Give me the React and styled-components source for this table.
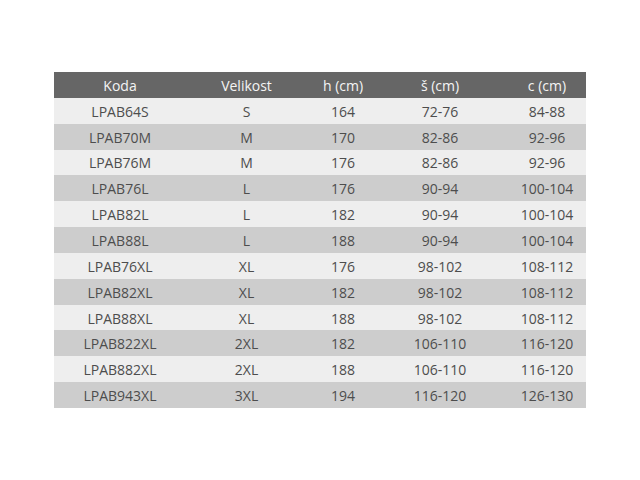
import styled, { createGlobalStyle } from "styled-components";

const GlobalStyle = createGlobalStyle`
  body {
    margin: 0;
    background: #ffffff;
    font-family: "Open Sans", "Liberation Sans", sans-serif;
  }
`;

const Page = styled.div`
  width: 640px;
  height: 480px;
  padding: 72px 54px 0;
  box-sizing: border-box;
`;

const Table = styled.div`
  display: grid;
  grid-template-columns: 132px 121px 72px 122px 85px;
  grid-auto-rows: 25.85px;
  width: 532px;
`;

const Row = styled.div`
  display: contents;
`;

const Cell = styled.div`
  display: flex;
  align-items: center;
  justify-content: center;
  padding-top: 1px;
  padding-left: ${(p) => (p.last ? "7px" : "0")};
  font-size: 14px;
  color: ${(p) => (p.head ? "#f4f4f4" : "#4d4d4d")};
  background: ${(p) => (p.head ? "#666666" : p.dark ? "#cdcdcd" : "#eeeeee")};
  white-space: nowrap;
`;

const header = ["Koda", "Velikost", "h (cm)", "š (cm)", "c (cm)"];

const rows = [
  ["LPAB64S", "S", "164", "72-76", "84-88"],
  ["LPAB70M", "M", "170", "82-86", "92-96"],
  ["LPAB76M", "M", "176", "82-86", "92-96"],
  ["LPAB76L", "L", "176", "90-94", "100-104"],
  ["LPAB82L", "L", "182", "90-94", "100-104"],
  ["LPAB88L", "L", "188", "90-94", "100-104"],
  ["LPAB76XL", "XL", "176", "98-102", "108-112"],
  ["LPAB82XL", "XL", "182", "98-102", "108-112"],
  ["LPAB88XL", "XL", "188", "98-102", "108-112"],
  ["LPAB822XL", "2XL", "182", "106-110", "116-120"],
  ["LPAB882XL", "2XL", "188", "106-110", "116-120"],
  ["LPAB943XL", "3XL", "194", "116-120", "126-130"],
];

export default function App() {
  return (
    <>
      <GlobalStyle />
      <Page>
        <Table>
          <Row>
            {header.map((h, i) => (
              <Cell key={h} head last={i === 4}>
                {h}
              </Cell>
            ))}
          </Row>
          {rows.map((r, ri) => (
            <Row key={r[0]}>
              {r.map((v, i) => (
                <Cell key={i} dark={ri % 2 === 1} last={i === 4}>
                  {v}
                </Cell>
              ))}
            </Row>
          ))}
        </Table>
      </Page>
    </>
  );
}
